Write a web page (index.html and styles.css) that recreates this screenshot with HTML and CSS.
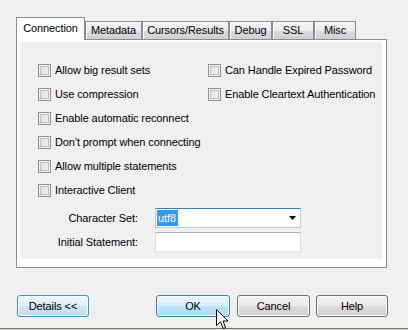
FILE: index.html
```html
<!DOCTYPE html>
<html lang="en">
<head>
    <meta charset="UTF-8">
    <title>Connection Options</title>
    <link rel="stylesheet" href="styles.css">
</head>
<body>
    <div class="dialog">
        <div class="tabs">
            <div class="tab active tab-connection">Connection</div>
            <div class="tab tab-metadata">Metadata</div>
            <div class="tab tab-cursors">Cursors/Results</div>
            <div class="tab tab-debug">Debug</div>
            <div class="tab tab-ssl">SSL</div>
            <div class="tab tab-misc">Misc</div>
        </div>
        <div class="panel">
            <div class="page">
                <div class="options">
                    <div class="col col-left">
                        <label class="row"><span class="check"></span>Allow big result sets</label>
                        <label class="row"><span class="check"></span>Use compression</label>
                        <label class="row"><span class="check"></span>Enable automatic reconnect</label>
                        <label class="row"><span class="check"></span>Don't prompt when connecting</label>
                        <label class="row"><span class="check"></span>Allow multiple statements</label>
                        <label class="row"><span class="check"></span>Interactive Client</label>
                    </div>
                    <div class="col col-right">
                        <label class="row"><span class="check"></span>Can Handle Expired Password</label>
                        <label class="row"><span class="check"></span>Enable Cleartext Authentication</label>
                    </div>
                </div>
                <div class="form">
                    <div class="field">
                        <span class="field-label">Character Set:</span>
                        <div class="select">
                            <span class="selected-text">utf8</span>
                            <svg class="arrow" width="7" height="4" viewBox="0 0 7 4"><path d="M0 0h7L3.5 4z" fill="#000"/></svg>
                        </div>
                    </div>
                    <div class="field">
                        <span class="field-label">Initial Statement:</span>
                        <div class="input"></div>
                    </div>
                </div>
            </div>
        </div>
        <div class="buttons">
            <button class="btn btn-blue btn-details">Details &lt;&lt;</button>
            <button class="btn btn-blue btn-hover btn-ok">OK</button>
            <button class="btn btn-cancel">Cancel</button>
            <button class="btn btn-help">Help</button>
        </div>
        <div class="bottom-line"></div>

        <svg class="cursor" width="13" height="21" viewBox="0 0 13 21">
            <path d="M0.5 0.5 L0.5 16.5 L4.5 12.8 L7.2 19.5 L9.6 18.5 L7 12 L12 12 Z" fill="#fff" stroke="#000" stroke-width="1" stroke-linejoin="miter"/>
        </svg>
    </div>
</body>
</html>
```

FILE: styles.css
```css
* {
    margin: 0;
    padding: 0;
    box-sizing: border-box;
}
body {
    font-family: 'Liberation Sans', Arial, sans-serif;
    font-size: 11px;
    letter-spacing: -0.1px;
    color: #000;
    background: #f0f0f0;
}
.dialog {
    position: relative;
    width: 408px;
    height: 330px;
    overflow: hidden;
}

/* Tabs */
.tabs {
    display: flex;
    align-items: flex-end;
    margin: 17px 0 0 16px;
    height: 23px;
}
.tab {
    height: 18px;
    margin-bottom: 1px;
    border: 1px solid #898c95;
    border-bottom: none;
    background: linear-gradient(to bottom, #f3f3f3, #ebebeb 50%, #dddddd 51%, #cfcfcf);
    box-shadow: inset 1px 1px 0 #fcfcfc;
    text-align: center;
    line-height: 17px;
}
.tab.active {
    height: 23px;
    margin-bottom: 0;
    background: #fff;
    box-shadow: none;
    line-height: 20px;
}
.tab-connection { width: 69px; }
.tab-metadata { width: 57px; }
.tab-cursors { width: 87px; }
.tab-debug { width: 43px; }
.tab-ssl { width: 42px; }
.tab-misc { width: 42px; }

.panel {
    margin: -1px 0 0 16px;
    width: 371px;
    height: 229px;
    border: 1px solid #898c95;
    background: #fff;
    padding: 2px 4px 8px 3px;
}
.page {
    height: 100%;
    background: #f0f0f0;
    padding: 16px 0 0 18px;
}

/* Checkboxes */
.options {
    display: flex;
}
.col-left {
    width: 170px;
}
.row {
    display: flex;
    align-items: center;
    height: 24px;
    white-space: nowrap;
}
.check {
    width: 13px;
    height: 13px;
    margin-right: 4px;
    flex-shrink: 0;
    border: 1px solid #8e8f8f;
    background: linear-gradient(135deg, #d6d8db, #f7f7f7);
    box-shadow: inset 0 0 0 1px #f4f4f4, inset 0 0 0 2px #b8bcc2;
}

/* Form fields */
.form {
    margin-top: 6px;
    display: flex;
    flex-direction: column;
    gap: 4px;
}
.field {
    display: flex;
    align-items: center;
    gap: 17px;
}
.field-label {
    width: 100px;
    text-align: right;
}
.select,
.input {
    width: 146px;
    height: 20px;
    background: #fff;
}
.select {
    display: flex;
    align-items: center;
    justify-content: space-between;
    padding: 0 4px 0 1px;
    border: 1px solid #b5cfe7;
    border-top-color: #3d7bad;
}
.selected-text {
    background: #3399ff;
    color: #fff;
    padding: 0 2px 0 1px;
    line-height: 16px;
}
.input {
    border: 1px solid #e3e9ef;
    border-top-color: #abadb3;
    border-left-color: #dbdfe6;
    border-right-color: #dbdfe6;
}

/* Buttons */
.buttons {
    display: flex;
    align-items: center;
    margin-top: 26px;
    padding: 0 20px 0 17px;
    height: 23px;
}
.btn {
    font-family: inherit;
    font-size: 11px;
    letter-spacing: -0.1px;
    color: #000;
    height: 22px;
    border: 1px solid #707070;
    border-radius: 3px;
    background: linear-gradient(to bottom, #f2f2f2, #ebebeb 50%, #dddddd 51%, #cfcfcf);
    box-shadow: inset 0 0 0 1px #fbfbfb;
}
.btn-blue {
    border-color: #3c7fb1;
    background: linear-gradient(to bottom, #eaf6fd, #d9f0fc 50%, #bee6fd 51%, #a7d9f5);
    box-shadow: inset 0 0 0 1px #f4fbfe;
}
.btn-details {
    width: 72px;
    background: linear-gradient(to bottom, #ecf5fb, #dfeef8 50%, #cfe5f3 51%, #c0ddef);
    border-color: #3399cc;
}
.btn-ok {
    width: 74px;
    margin-left: auto;
}
.btn-cancel {
    width: 73px;
    margin-left: 7px;
}
.btn-help {
    width: 72px;
    margin-left: 6px;
}

.bottom-line {
    margin-top: 11px;
    height: 1px;
    background: #77736a;
    box-shadow: 0 1px 0 #d8d8d8;
}

.cursor {
    position: absolute;
    left: 216px;
    top: 309px;
}
```
